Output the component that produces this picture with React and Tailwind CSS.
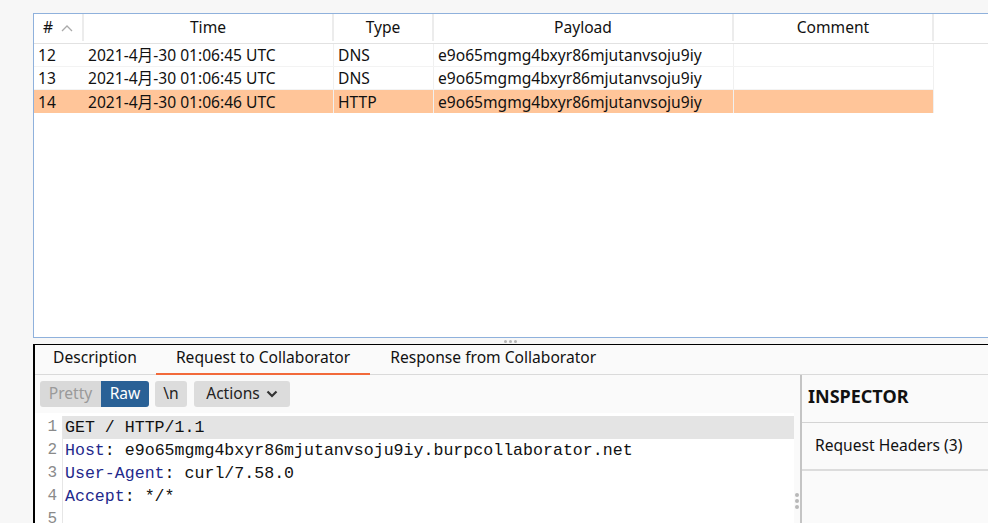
const rows = [
  { id: 12, time: '2021-4月-30 01:06:45 UTC', type: 'DNS', payload: 'e9o65mgmg4bxyr86mjutanvsoju9iy' },
  { id: 13, time: '2021-4月-30 01:06:45 UTC', type: 'DNS', payload: 'e9o65mgmg4bxyr86mjutanvsoju9iy' },
  { id: 14, time: '2021-4月-30 01:06:46 UTC', type: 'HTTP', payload: 'e9o65mgmg4bxyr86mjutanvsoju9iy', selected: true },
];

const lines = [
  [['GET / HTTP/1.1', '']],
  [['Host', ': e9o65mgmg4bxyr86mjutanvsoju9iy.burpcollaborator.net']],
  [['User-Agent', ': curl/7.58.0']],
  [['Accept', ': */*']],
  [],
];

const uiFont = { fontFamily: '"Noto Sans", "Noto Sans CJK SC", sans-serif' };

function Header() {
  return (
    <div className="flex h-[30px] pb-[2px] border-b border-[#e2e2e2] text-[15.6px] text-[#111]">
      <div className="w-[50px] flex items-center justify-center gap-2 border-r-2 border-[#ececec]">
        <span>#</span>
        <svg width="12" height="8" viewBox="0 0 12 8" fill="none" stroke="#aaa" strokeWidth="1.3">
          <path d="M1 7 L6 2 L11 7" />
        </svg>
      </div>
      <div className="w-[250px] flex items-center justify-center border-r-2 border-[#ececec]">Time</div>
      <div className="w-[100px] flex items-center justify-center border-r-2 border-[#ececec]">Type</div>
      <div className="w-[300px] flex items-center justify-center border-r-2 border-[#ececec]">Payload</div>
      <div className="w-[200px] flex items-center justify-center border-r-2 border-[#ececec]">Comment</div>
      <div className="flex-1" />
    </div>
  );
}

function Row({ r }) {
  return (
    <div className="flex h-[23px] text-[15.6px] text-[#111]">
      <div className={`flex w-[900px] ${r.selected ? 'bg-[#ffc599]' : 'bg-white border-b border-[#f3f3f3]'}`}>
        <div className="w-[50px] pl-[4px] pt-[2px] flex items-center">{r.id}</div>
        <div className="w-[250px] pl-[4px] pt-[2px] flex items-center border-r border-[#f0f0f0]">{r.time}</div>
        <div className="w-[100px] pl-[4px] pt-[2px] flex items-center border-r border-[#f0f0f0]">{r.type}</div>
        <div className="w-[300px] pl-[4px] pt-[2px] flex items-center border-r border-[#f0f0f0]">{r.payload}</div>
        <div className="w-[200px] flex items-center border-r border-[#f0f0f0]" />
      </div>
    </div>
  );
}

export default function App() {
  return (
    <div className="w-[988px] h-[523px] overflow-hidden bg-[#f7f7f7] pl-[33px] pt-[13px] flex flex-col" style={uiFont}>
      <div className="h-[325px] shrink-0 bg-white border-t border-l border-b border-[#8fb1dc] flex flex-col">
        <Header />
        {rows.map((r) => (
          <Row key={r.id} r={r} />
        ))}
      </div>

      <div className="h-[6px] shrink-0 flex items-center justify-center">
        <div className="flex gap-[2px]">
          <span className="w-[3px] h-[3px] rounded-full bg-[#b5b5b5]" />
          <span className="w-[3px] h-[3px] rounded-full bg-[#b5b5b5]" />
          <span className="w-[3px] h-[3px] rounded-full bg-[#b5b5b5]" />
        </div>
      </div>

      <div className="flex-1 min-h-0 border-t border-l-2 border-black bg-[#fafafa] flex flex-col">
        <div className="h-[30px] shrink-0 flex items-stretch border-b border-[#dadada] text-[15.6px] text-[#111]">
          <div className="pl-[18px] pr-[19px] pb-[3px] flex items-center">Description</div>
          <div className="px-[20px] pb-[3px] flex items-center border-b-2 border-[#f26a3a] -mb-px">Request to Collaborator</div>
          <div className="px-[20px] pb-[3px] flex items-center">Response from Collaborator</div>
        </div>

        <div className="flex-1 min-h-0 flex">
          <div className="w-[759px] flex flex-col">
            <div className="h-[38px] shrink-0 flex items-center pl-[5px] gap-[6px] text-[15.6px]">
              <div className="flex h-[26px] rounded-[3px] overflow-hidden">
                <div className="w-[61px] bg-[#d9d9d9] text-[#9a9a9a] flex items-center justify-center">Pretty</div>
                <div className="w-[48px] bg-[#2a6196] text-white flex items-center justify-center">Raw</div>
              </div>
              <div className="w-[32px] h-[26px] rounded-[3px] bg-[#dcdcdc] text-[#222] flex items-center justify-center">\n</div>
              <div className="ml-px w-[96px] h-[26px] rounded-[3px] bg-[#dcdcdc] text-[#222] flex items-center justify-center gap-[6px]">
                <span>Actions</span>
                <svg width="12" height="8" viewBox="0 0 12 8" fill="none" stroke="#333" strokeWidth="2.2">
                  <path d="M1.5 1.5 L6 6 L10.5 1.5" />
                </svg>
              </div>
            </div>
            <div className="flex-1 bg-white pt-[3px]" style={{ fontFamily: '"Liberation Mono", "DejaVu Sans Mono", monospace' }}>
              {lines.map((parts, i) => (
                <div key={i} className="flex h-[23px] text-[16.6px]">
                  <div className="w-[28px] pr-[5px] text-right text-[#8a8a8a] border-r border-[#e6e6e6] leading-[23px] text-[16px]">{i + 1}</div>
                  <div className={`flex-1 pl-[2px] leading-[23px] whitespace-pre ${i === 0 ? 'bg-[#e4e4e4]' : ''}`}>
                    {parts.map(([a, b], j) =>
                      b === '' ? (
                        <span key={j} className="text-[#111]">{a}</span>
                      ) : (
                        <span key={j}>
                          <span className="text-[#1f2a8c]">{a}</span>
                          <span className="text-[#111]">{b}</span>
                        </span>
                      )
                    )}
                  </div>
                </div>
              ))}
            </div>
          </div>
          <div className="w-[6px] flex flex-col items-center justify-end pb-[14px] gap-[2px]">
            <span className="w-[4px] h-[4px] rounded-full bg-[#b8b8b8]" />
            <span className="w-[4px] h-[4px] rounded-full bg-[#b8b8b8]" />
            <span className="w-[4px] h-[4px] rounded-full bg-[#b8b8b8]" />
          </div>
          <div className="flex-1 border-l-2 border-[#c4c4c4] flex flex-col">
            <div className="h-[48px] pb-[5px] border-b border-[#d4d4d4] flex items-center pl-[6px] text-[18px] font-bold text-[#111]">INSPECTOR</div>
            <div className="h-[48px] border-b-2 border-[#dcdcdc] flex items-center pl-[13px] text-[15.6px] text-[#111]">Request Headers (3)</div>
          </div>
        </div>
      </div>
    </div>
  );
}
